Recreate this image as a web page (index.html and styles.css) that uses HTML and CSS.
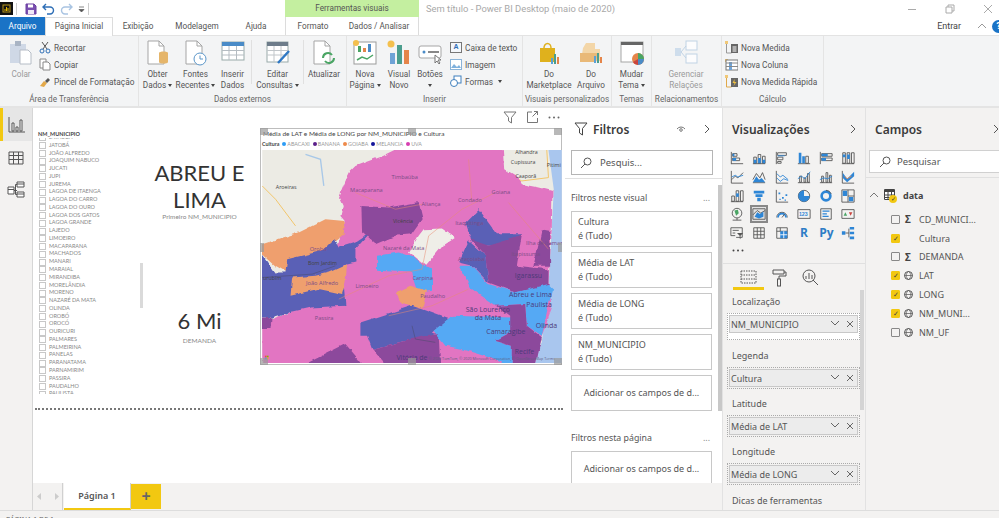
FILE: index.html
```html
<!DOCTYPE html>
<html lang="pt">
<head>
<meta charset="utf-8">
<title>Power BI Desktop</title>
<link rel="stylesheet" href="styles.css">
</head>
<body>
<div class="app">
  <header class="titlebar">
    <div class="qat">
      <svg class="ico-app" width="13" height="13" viewBox="0 0 13 13"><rect width="13" height="13" fill="#111"/><rect x="3" y="3" width="7" height="7" fill="none" stroke="#b8961c"/><path d="M5 9V7M6.500 9V5M8 9V6" stroke="#e6b800"/></svg>
      <span class="qsep"></span>
      <svg width="12" height="12" viewBox="0 0 12 12"><path d="M1 1h8l2 2v8H1z" fill="#7a4fb0" stroke="#6b3fa0"/><rect x="3" y="1.500" width="5" height="3" fill="#fff"/><rect x="3" y="7" width="6" height="4" fill="#efe8f6"/></svg>
      <svg width="13" height="12" viewBox="0 0 13 12"><path d="M4 1 1 4l3 3M1 4h7a3.500 3.500 0 0 1 0 7H5" fill="none" stroke="#2f6fb6" stroke-width="1.400"/></svg>
      <svg width="13" height="12" viewBox="0 0 13 12"><path d="M9 1l3 3-3 3M12 4H5a3.500 3.500 0 0 0 0 7h3" fill="none" stroke="#a9c4e2" stroke-width="1.400"/></svg>
      <svg width="7" height="12" viewBox="0 0 7 12"><path d="M1 4h5M1 6.500h5l-2.500 2.500z" fill="#555" stroke="#555" stroke-width=".7"/></svg>
      <span class="qsep"></span>
    </div>
    <div class="tools-title">Ferramentas visuais</div>
    <div class="doc-title">Sem título - Power BI Desktop (maio de 2020)</div>
    <div class="win">
      <svg width="10" height="10" viewBox="0 0 10 10"><path d="M1 5.500h8" stroke="#aaa"/></svg>
      <svg width="10" height="10" viewBox="0 0 10 10"><path d="M1 3h6v6H1zM3 3V1h6v6H7" fill="none" stroke="#aaa"/></svg>
      <svg width="10" height="10" viewBox="0 0 10 10"><path d="M1 1l8 8M9 1 1 9" stroke="#aaa"/></svg>
    </div>
  </header>

  <nav class="tabs">
    <span class="tab tab-file">Arquivo</span>
    <span class="tab tab-active">Página Inicial</span>
    <span class="tab tab-exib">Exibição</span>
    <span class="tab tab-model">Modelagem</span>
    <span class="tab tab-ajuda">Ajuda</span>
    <span class="tab tab-fmt">Formato</span>
    <span class="tab tab-dados">Dados / Analisar</span>
    <span class="tab-right">
      <span class="signin">Entrar</span>
      <svg width="10" height="6" viewBox="0 0 10 6"><path d="M1 5l4-4 4 4" fill="none" stroke="#999"/></svg>
      <span class="help">?</span>
    </span>
  </nav>

  <section class="ribbon">
    <div class="group g-clip">
      <div class="group-body">
        <div class="big w-colar muted">
          <svg class="big-ico" width="24" height="26" viewBox="0 0 24 26"><rect x="1" y="4" width="16" height="19" fill="#cfd8e6"/><rect x="6" y="1" width="6" height="5" fill="#a9b4c4"/><path d="M11 10h8l3 3v11H11z" fill="#fff" stroke="#b5bcc6"/></svg>
          <span class="lbl">Colar</span>
        </div>
        <div class="smalls s-clip">
          <div class="small"><svg width="12" height="13" viewBox="0 0 12 13"><path d="M3 1l5 7M9 1 4 8" stroke="#555" fill="none"/><circle cx="3" cy="10" r="2" fill="none" stroke="#2f6fb6"/><circle cx="9" cy="10" r="2" fill="none" stroke="#2f6fb6"/></svg>Recortar</div>
          <div class="small"><svg width="12" height="13" viewBox="0 0 12 13"><path d="M1 1h6v9H1z" fill="#fff" stroke="#888"/><path d="M4 4h5l2 2v6H4z" fill="#fff" stroke="#888"/></svg>Copiar</div>
          <div class="small"><svg width="12" height="13" viewBox="0 0 12 13"><path d="M1 11l4-5 3 2-3 4z" fill="#e3a94a"/><path d="M6 6l3-3 2 2-3 3z" fill="#555"/></svg>Pincel de Formatação</div>
        </div>
      </div>
      <div class="group-label">Área de Transferência</div>
    </div>

    <div class="group g-ext">
      <div class="group-body">
        <div class="big w-obter">
          <svg class="big-ico" width="24" height="26" viewBox="0 0 24 26"><path d="M2 1h11l5 5v18H2z" fill="#fff" stroke="#a5a5a5"/><path d="M13 1v5h5" fill="none" stroke="#a5a5a5"/><path d="M13 13c0-2 9-2 9 0v9c0 2-9 2-9 0z" fill="#e5b56a"/></svg>
          <span class="lbl">Obter<br>Dados <i class="caret"></i></span>
        </div>
        <div class="big w-fontes">
          <svg class="big-ico" width="24" height="26" viewBox="0 0 24 26"><path d="M2 1h11l5 5v18H2z" fill="#fff" stroke="#a5a5a5"/><path d="M13 1v5h5" fill="none" stroke="#a5a5a5"/><circle cx="16" cy="19" r="6" fill="#fff" stroke="#5b96c9"/><path d="M16 15.500V19h3" fill="none" stroke="#5b96c9"/></svg>
          <span class="lbl">Fontes<br>Recentes <i class="caret"></i></span>
        </div>
        <div class="big w-inserir">
          <svg class="big-ico" width="24" height="26" viewBox="0 0 24 26"><rect x="1" y="2" width="22" height="18" fill="#fff" stroke="#9aa"/><rect x="1" y="2" width="22" height="4" fill="#4a8bc7"/><path d="M1 10.500h22M1 15h22M8 6v14M15.500 6v14" stroke="#b5bcc2"/></svg>
          <span class="lbl">Inserir<br>Dados</span>
        </div>
        <span class="vsep"></span>
        <div class="big w-editar">
          <svg class="big-ico" width="24" height="26" viewBox="0 0 24 26"><rect x="1" y="2" width="21" height="20" fill="#fff" stroke="#9aa"/><rect x="1" y="2" width="21" height="4" fill="#6d7c8a"/><path d="M1 10.500h21M1 15h21M8 6v16M15 6v16" stroke="#c1c6ca"/><path d="M12 23l11-12" stroke="#2f78c4" stroke-width="2.400"/></svg>
          <span class="lbl">Editar<br>Consultas <i class="caret"></i></span>
        </div>
        <span class="vsep"></span>
        <div class="big w-atual">
          <svg class="big-ico" width="24" height="26" viewBox="0 0 24 26"><path d="M2 1h11l5 5v18H2z" fill="#fff" stroke="#a5a5a5"/><path d="M13 1v5h5" fill="none" stroke="#a5a5a5"/><path d="M11 18a5 5 0 0 1 9-3M22 18a5 5 0 0 1-9 3" fill="none" stroke="#4aa564" stroke-width="2"/></svg>
          <span class="lbl">Atualizar</span>
        </div>
      </div>
      <div class="group-label">Dados externos</div>
    </div>

    <div class="group g-ins">
      <div class="group-body">
        <div class="big w-nova">
          <svg class="big-ico" width="24" height="26" viewBox="0 0 24 26"><rect x="1" y="2" width="22" height="22" fill="#fff" stroke="#9b9b9b"/><rect x="5" y="6" width="3" height="6" fill="#4aa564"/><rect x="10" y="8" width="3" height="4" fill="#e5854a"/><rect x="15" y="4" width="3" height="8" fill="#4a8bc7"/><path d="M4 20l5-3 5 2 6-4" fill="none" stroke="#4aa564" stroke-width="1.500"/><circle cx="3" cy="3" r="3" fill="#f4c04e"/></svg>
          <span class="lbl">Nova<br>Página <i class="caret"></i></span>
        </div>
        <div class="big w-visual">
          <svg class="big-ico" width="24" height="26" viewBox="0 0 24 26"><circle cx="4" cy="4" r="3.500" fill="#f4c04e"/><rect x="3" y="13" width="5" height="11" fill="#6fa3d6"/><rect x="10" y="5" width="5" height="19" fill="#4b9e8e"/><rect x="17" y="10" width="5" height="14" fill="#e5854a"/></svg>
          <span class="lbl">Visual<br>Novo</span>
        </div>
        <div class="big w-botoes">
          <svg class="big-ico" width="24" height="26" viewBox="0 0 24 26"><rect x="1" y="6" width="22" height="12" rx="2" fill="#fff" stroke="#a5a5a5"/><circle cx="6" cy="12" r="1.500" fill="#4a8bc7"/><path d="M10 12h11" stroke="#555" stroke-width="1.400"/><path d="M17 15v8l2-2 2 3 1-1-2-3h3z" fill="#fff" stroke="#777"/></svg>
          <span class="lbl">Botões<br><i class="caret"></i></span>
        </div>
        <div class="smalls s-ins">
          <div class="small"><svg width="12" height="13" viewBox="0 0 12 13"><rect x=".500" y="1.500" width="11" height="10" fill="#f4f7fb" stroke="#777"/><text class="ico-a" x="3.500" y="8">A</text></svg>Caixa de texto</div>
          <div class="small"><svg width="12" height="13" viewBox="0 0 12 13"><rect x=".500" y="1.500" width="11" height="10" fill="#fff" stroke="#8ab3d8"/><path d="M1 10l3-4 3 3 2-2 2 3z" fill="#7fb1dd"/></svg>Imagem</div>
          <div class="small"><svg width="12" height="13" viewBox="0 0 12 13"><rect x="4" y="1" width="7" height="7" fill="#fff" stroke="#3f7fbd"/><circle cx="4" cy="8" r="3.500" fill="#fff" stroke="#3f7fbd"/></svg>Formas <i class="caret caret-s"></i></div>
        </div>
      </div>
      <div class="group-label">Inserir</div>
    </div>

    <div class="group g-vis">
      <div class="group-body">
        <div class="big w-market">
          <svg class="big-ico" width="24" height="26" viewBox="0 0 24 26"><path d="M3 8h15v14H3z" fill="#dfb11d"/><path d="M7 8a3.500 4.500 0 0 1 7 0" fill="none" stroke="#dfb11d" stroke-width="1.500"/><rect x="14" y="18" width="2" height="6" fill="#5aa0d6"/><rect x="17" y="14" width="2" height="10" fill="#4b9e8e"/><rect x="20" y="17" width="2" height="7" fill="#e5854a"/></svg>
          <span class="lbl">Do<br>Marketplace</span>
        </div>
        <div class="big w-arq">
          <svg class="big-ico" width="24" height="26" viewBox="0 0 24 26"><path d="M4 8l3-5h9v6h5v12H2z" fill="#f3d6a8"/><path d="M1 13h18l-2 9H1z" fill="#e9b978"/><rect x="15" y="16" width="2" height="7" fill="#5aa0d6"/><rect x="18" y="13" width="2" height="10" fill="#4b9e8e"/><rect x="21" y="17" width="2" height="6" fill="#e5854a"/></svg>
          <span class="lbl">Do<br>Arquivo</span>
        </div>
      </div>
      <div class="group-label">Visuais personalizados</div>
    </div>

    <div class="group g-tema">
      <div class="group-body">
        <div class="big w-tema">
          <svg class="big-ico" width="24" height="26" viewBox="0 0 24 26"><rect x="1" y="2" width="22" height="20" fill="#fff" stroke="#a5a5a5"/><rect x="1" y="2" width="22" height="3" fill="#666"/><circle cx="18" cy="19" r="6" fill="#e5854a"/><path d="M18 19V13a6 6 0 0 1 6 6z" fill="#4aa564"/><path d="M18 19h6a6 6 0 0 1-6 6z" fill="#4a8bc7"/><path d="M18 19v6a6 6 0 0 1-5-3z" fill="#c9453f"/></svg>
          <span class="lbl">Mudar<br>Tema <i class="caret"></i></span>
        </div>
      </div>
      <div class="group-label">Temas</div>
    </div>

    <div class="group g-rel">
      <div class="group-body">
        <div class="big w-ger faded">
          <svg class="big-ico" width="24" height="26" viewBox="0 0 24 26"><rect x="12" y="1" width="11" height="9" fill="#fff" stroke="#b4cbe2"/><rect x="12" y="14" width="11" height="9" fill="#fff" stroke="#b4cbe2"/><rect x="1" y="8" width="6" height="8" fill="#c5d8ea"/><path d="M7 12l5-6M7 12l5 6" stroke="#b4cbe2"/></svg>
          <span class="lbl">Gerenciar<br>Relações</span>
        </div>
      </div>
      <div class="group-label">Relacionamentos</div>
    </div>

    <div class="group g-calc">
      <div class="group-body">
        <div class="smalls s-calc">
          <div class="small"><svg width="13" height="13" viewBox="0 0 13 13"><rect width="3" height="3" fill="#f0c878"/><path d="M1.500 3v9h5" fill="none" stroke="#999"/><rect x="6" y="3" width="7" height="9" fill="#666"/><path d="M7.500 6h4M7.500 8h4M7.500 10h4" stroke="#fff"/></svg>Nova Medida</div>
          <div class="small"><svg width="13" height="13" viewBox="0 0 13 13"><rect x="0" y="1" width="3" height="3" fill="#f0c878"/><rect x="1" y="2" width="12" height="10" fill="#fff" stroke="#777"/><rect x="4" y="4" width="3" height="8" fill="#6fa3d6"/><path d="M1 5h12M1 8.500h12" stroke="#888"/></svg>Nova Coluna</div>
          <div class="small"><svg width="13" height="13" viewBox="0 0 13 13"><rect width="3" height="3" fill="#f0c878"/><path d="M1.500 3v9h5" fill="none" stroke="#e0a94a"/><rect x="6" y="3" width="7" height="9" fill="#666"/><path d="M9.500 4 7.500 8h2l-1 3 3-4h-2z" fill="#f0c040"/></svg>Nova Medida Rápida</div>
        </div>
      </div>
      <div class="group-label">Cálculo</div>
    </div>
  </section>

  <main class="workspace">
    <aside class="rail">
      <div class="rail-item rail-on"><svg width="18" height="18" viewBox="0 0 18 18"><path d="M1 1v15h16" fill="none" stroke="#555"/><path d="M4 7h2v8H4zM8 11h2v4H8zM12 4h2v11h-2z" fill="#fff" stroke="#555"/></svg></div>
      <div class="rail-item"><svg width="18" height="18" viewBox="0 0 18 18"><path d="M2 3h14v12H2zM2 6.500h14M2 10.500h14M6.500 3v12M11.500 3v12" fill="none" stroke="#555"/></svg></div>
      <div class="rail-item"><svg width="18" height="18" viewBox="0 0 18 18"><path d="M10 1h7v5h-7zM10 3h7M10 11h7v5h-7zM10 13h7M1 6h6v7H1zM1 8.500h6M7 9.500h3M10 3.500H8.500v10H10" fill="#fff" stroke="#555"/></svg></div>
    </aside>

    <div class="center">
      <div class="canvas">
        <div class="report">
          <div class="slicer">
            <div class="slicer-title">NM_MUNICIPIO</div>
            <ul class="slicer-list">
              <li>JATAÚBA</li><li>JATOBÁ</li><li>JOÃO ALFREDO</li><li>JOAQUIM NABUCO</li><li>JUCATI</li><li>JUPI</li><li>JUREMA</li><li>LAGOA DE ITAENGA</li><li>LAGOA DO CARRO</li><li>LAGOA DO OURO</li><li>LAGOA DOS GATOS</li><li>LAGOA GRANDE</li><li>LAJEDO</li><li>LIMOEIRO</li><li>MACAPARANA</li><li>MACHADOS</li><li>MANARI</li><li>MARAIAL</li><li>MIRANDIBA</li><li>MORELÂNDIA</li><li>MORENO</li><li>NAZARÉ DA MATA</li><li>OLINDA</li><li>OROBÓ</li><li>OROCÓ</li><li>OURICURI</li><li>PALMARES</li><li>PALMEIRINA</li><li>PANELAS</li><li>PARANATAMA</li><li>PARNAMIRIM</li><li>PASSIRA</li><li>PAUDALHO</li><li>PAULISTA</li>
            </ul>
          </div>
          <div class="scrollbar-col"><span class="slicer-thumb"></span></div>
          <div class="cards">
            <div class="card card-top">
              <div class="card-value">ABREU E LIMA</div>
              <div class="card-label">Primeiro NM_MUNICIPIO</div>
            </div>
            <div class="card card-bottom">
              <div class="card-value">6 Mi</div>
              <div class="card-label">DEMANDA</div>
            </div>
          </div>
          <div class="map-col">
            <div class="visual-head">
              <svg width="14" height="13" viewBox="0 0 14 13"><path d="M1 1h12L8.500 6.500V12l-3-2V6.500z" fill="none" stroke="#777"/></svg>
              <svg width="11" height="12" viewBox="0 0 11 12"><path d="M5 1H.5v10.500H10.500V7M7 .500h3.500V4M10.500 .500 5.500 5.500" fill="none" stroke="#777"/></svg>
              <svg width="12" height="3" viewBox="0 0 12 3"><circle cx="1.500" cy="1.500" r="1" fill="#666"/><circle cx="6" cy="1.500" r="1" fill="#666"/><circle cx="10.500" cy="1.500" r="1" fill="#666"/></svg>
            </div>
            <div class="map-frame">
              <div class="map-title">Média de LAT e Média de LONG por NM_MUNICIPIO e Cultura</div>
              <div class="legend">
                <b>Cultura</b>
                <span><i class="dot d-aba"></i>ABACAXI</span>
                <span><i class="dot d-ban"></i>BANANA</span>
                <span><i class="dot d-goi"></i>GOIABA</span>
                <span><i class="dot d-mel"></i>MELANCIA</span>
                <span><i class="dot d-uva"></i>UVA</span>
              </div>
              <svg class="map" width="300" height="213" viewBox="20 122 900 640">
                <defs>
                  <filter id="rough" x="-5%" y="-5%" width="110%" height="110%">
                    <feTurbulence type="fractalNoise" baseFrequency="0.03" numOctaves="3" seed="4"/>
                    <feDisplacementMap in="SourceGraphic" scale="14" xChannelSelector="R" yChannelSelector="G"/>
                    <feGaussianBlur stdDeviation="1"/>
                  </filter>
                </defs>
                <rect x="20" y="122" width="900" height="640" fill="#ecebe4"/>
                <path d="M880 122H920V762H830L860 700 882 500 896 240z" fill="#a9c6ee"/>
                <path d="M150 135 195 150 205 230" fill="none" stroke="#a8c8e8" stroke-width="4"/>
                <path d="M20 230 60 270 120 350M750 190 800 215 880 205M875 122 880 205" fill="none" stroke="#f2c66b" stroke-width="3"/>
                <g filter="url(#rough)">
                  <path d="M417 122 380 140 340 155 300 170 285 185 270 215 250 265 262 290 255 320 268 335 240 420 130 600 20 640V775H840L860 680 890 600 880 520 890 360 892 245 850 235 800 225 790 205 750 180 745 110H417z" fill="#e274c2"/>
                  <path d="M10 408 130 370 210 330 268 335 265 375 240 395 215 425 130 450 95 490 60 470 10 425z" fill="#ef9f6e"/>
                  <path d="M10 420 60 490 90 490 95 450 200 425 235 390 250 415 300 400 345 370 300 420 300 460 260 470 270 590 165 595 100 610 48 625 10 620z" fill="#5a60b6"/>
                  <path d="M110 505 180 500 220 490 275 465 270 520 260 555 190 540 105 560z" fill="#ef9f6e"/>
                  <path d="M318 290 400 295 490 278 502 330 470 375 420 380 360 405 320 370z" fill="#8c4a9c"/>
                  <path d="M460 430 490 380 505 360 560 358 598 385 560 410 510 470z" fill="#efeee8"/>
                  <path d="M365 440 430 430 475 445 510 475 530 480 530 545 490 550 470 490 365 485z" fill="#55a9f4"/>
                  <path d="M420 550 465 530 515 545 500 598 440 585z" fill="#ef9f6e"/>
                  <path d="M315 640 470 590 580 630 530 670 550 680 450 695 350 720 335 680 315 680z" fill="#5a60b6"/>
                  <path d="M350 720 450 695 550 670 555 775H400z" fill="#8c4a9c"/>
                  <path d="M130 775 270 705 330 775zM10 620 48 625 45 660 10 660z" fill="#8c4a9c"/>
                  <path d="M630 340 670 300 725 375 800 375 790 400 700 410 650 400z" fill="#5a60b6"/>
                  <path d="M645 390 700 410 780 385 800 375 785 470 880 480 880 530 780 550 700 520 690 440zM835 470 860 360 885 365 885 470z" fill="#8c4a9c"/>
                  <path d="M610 460 640 395 690 440 700 520 650 470z" fill="#5a60b6"/>
                  <path d="M610 470 650 470 700 525 780 550 880 525 895 540 880 590 860 680 815 650 810 585 725 590 700 575 650 540z" fill="#55a9f4"/>
                  <path d="M535 665 590 620 770 625 765 670 720 695 770 710 770 775 700 745 620 720 570 710z" fill="#55a9f4"/>
                  <path d="M725 590 810 585 815 650 860 685 840 775H770L770 710 720 695 765 670 765 620z" fill="#8c4a9c"/>
                </g>
                <path d="M250 570 400 500 500 480 520 380 620 300 720 250M400 620 530 590 640 540M640 150 650 280M300 250 420 300 500 285M760 280 880 420" fill="none" stroke="#e98a70" stroke-width="3" opacity=".5"/>
                <path d="M20 505 170 495 240 470M470 650 480 690 540 700" fill="none" stroke="#4a4a6a" stroke-width="3" opacity=".5"/>
                <g class="places">
                  <text x="448" y="208">Timbaúba</text><text x="333" y="248">Macaparana</text><text x="527" y="291">Aliança</text><text x="644" y="278">Condado</text><text x="737" y="253">Goiana</text>
                  <text x="188" y="424">Orobó</text><text x="200" y="527">João Alfredo</text><text x="335" y="538">Limoeiro</text><text x="206" y="634">Passira</text><text x="502" y="514">Carpina</text><text x="532" y="568">Paudalho</text>
                  <text x="642" y="348">Itaquitinga</text><text x="812" y="442">Itapissuma</text><text x="445" y="423">Nazaré da Mata</text><text x="648" y="457">Araçoiaba</text><text x="872" y="407">Ilha de Itamará</text>
                </g>
                <g class="places-dark">
                  <text x="443" y="340">Vicência</text><text x="201" y="467">Bom Jardim</text><text x="50" y="512">urubim</text><text x="92" y="238">Aroeiras</text><text x="814" y="133">Alhandra</text><text x="804" y="164">Cupissura</text><text x="812" y="205">Caaporã</text><text x="896" y="172">Pitimi</text>
                </g>
                <g class="places-big">
                  <text x="698" y="610">São Lourenço</text><text x="698" y="634">da Mata</text><text x="752" y="674">Camaragibe</text><text x="470" y="752">Vitória de</text><text x="820" y="506">Igarassu</text><text x="826" y="565">Abreu e Lima</text><text x="852" y="594">Paulista</text><text x="874" y="656">Olinda</text><text x="808" y="735">Recife</text>
                </g>
                <text class="attrib" x="710" y="752">© 2020 TomTom, © 2020 Microsoft Corporation, © OpenStreetMap  Terms</text>
                <g><rect x="28" y="740" width="5" height="5" fill="#e8553a"/><rect x="34" y="740" width="5" height="5" fill="#7fba00"/><rect x="28" y="746" width="5" height="5" fill="#00a4ef"/><rect x="34" y="746" width="5" height="5" fill="#ffb900"/></g>
              </svg>
              <i class="handle h-tl"></i><i class="handle h-tc"></i><i class="handle h-tr"></i>
              <i class="handle h-ml"></i><i class="handle h-mr"></i>
              <i class="handle h-bl"></i><i class="handle h-bc"></i><i class="handle h-br"></i>
            </div>
          </div>
        </div>
        <div class="dotline"></div>
      </div>
      <div class="pagebar">
        <span class="arrows">
          <svg width="5" height="7" viewBox="0 0 5 7"><path d="M4 0v7L0 3.500z" fill="#ccc"/></svg>
          <svg width="5" height="7" viewBox="0 0 5 7"><path d="M1 0v7l4-3.500z" fill="#ccc"/></svg>
        </span>
        <span class="page-tab">Página 1</span>
        <span class="page-add">+</span>
      </div>
    </div>

    <aside class="filters">
      <div class="filters-scroll">
        <div class="pane-head f-head">
          <svg width="14" height="14" viewBox="0 0 14 14"><path d="M1 1h12L8.500 6.500V13l-3-2V6.500z" fill="none" stroke="#444"/></svg>
          <span class="pane-title f-title">Filtros</span>
          <svg class="eye" width="10" height="8" viewBox="0 0 10 8"><path d="M1 4a5 5 0 0 1 8 0" fill="none" stroke="#777"/><circle cx="5" cy="5" r="1.300" fill="none" stroke="#777"/></svg>
          <svg width="6" height="10" viewBox="0 0 6 10"><path d="M1 1l4 4-4 4" fill="none" stroke="#555"/></svg>
        </div>
        <div class="search f-search">
          <svg width="12" height="12" viewBox="0 0 12 12"><circle cx="7.500" cy="4.500" r="3.500" fill="none" stroke="#555"/><path d="M5 7 1 11" stroke="#555"/></svg>
          <span>Pesquis...</span>
        </div>
        <div class="f-rule"></div>
        <div class="f-sec"><span>Filtros neste visual</span><span class="dots">...</span></div>
        <div class="f-card">Cultura<br>é (Tudo)</div>
        <div class="f-card">Média de LAT<br>é (Tudo)</div>
        <div class="f-card">Média de LONG<br>é (Tudo)</div>
        <div class="f-card">NM_MUNICIPIO<br>é (Tudo)</div>
        <div class="f-card f-add">Adicionar os campos de d...</div>
        <div class="f-sec f-sec2"><span>Filtros nesta página</span><span class="dots">...</span></div>
        <div class="f-card f-add">Adicionar os campos de d...</div>
        <span class="f-thumb"></span>
      </div>
      <div class="f-foot"></div>
    </aside>

    <aside class="viz">
      <div class="pane-head v-head">
        <span class="pane-title">Visualizações</span>
        <svg width="6" height="10" viewBox="0 0 6 10"><path d="M1 1l4 4-4 4" fill="none" stroke="#555"/></svg>
      </div>
      <div class="viz-grid">
        <svg viewBox="0 0 16 16"><path class="g" d="M1.500 1v14M1.500 14.500H15M3 3h5v3H3zM3 8h8v3H3z"/><path class="b" d="M3 3h2v3H3zM3 8h4v3H3z"/></svg>
        <svg viewBox="0 0 16 16"><path class="g" d="M1 14.500h14M2 7h3v7H2zM7 4h3v10H7zM12 6h3v8h-3z"/><path class="b" d="M2 10h3v4H2zM7 8h3v6H7zM12 10h3v4h-3z"/></svg>
        <svg viewBox="0 0 16 16"><path class="g" d="M1.500 1v14M3 2h10v3H3zM3 7h6v3H3zM3 12h4v2H3z"/><path class="b" d="M3 5h8v1H3z"/></svg>
        <svg viewBox="0 0 16 16"><path class="g" d="M1 14.500h14M10 6h3v8h-3z"/><path class="b" d="M2 2h3v12H2zM6 6h3v8H6z"/></svg>
        <svg viewBox="0 0 16 16"><path class="g" d="M1.500 1v14M3 3h12v3H3zM3 8h12v3H3z"/><path class="b" d="M3 3h7v3H3zM3 8h5v3H3z"/></svg>
        <svg viewBox="0 0 16 16"><path class="g" d="M1 14.500h14M2 2h3v12H2zM7 2h3v12H7zM12 2h3v12h-3z"/><path class="b" d="M7 4h3v5H7zM2 4h3v3H2z"/></svg>

        <svg viewBox="0 0 16 16"><path class="g" d="M1.500 1v14H15M2 11l4-4 3 2 6-6"/><path class="l" d="M2 8l4-2 3 2 6-2"/></svg>
        <svg viewBox="0 0 16 16"><path class="g" d="M1 14.500h14M1 11l4-7 4 5 3-6 3 8"/><path class="b" d="M1 14l4-7 3 4 3-2 4 5z"/></svg>
        <svg viewBox="0 0 16 16"><path class="g" d="M1.500 1v14H15"/><path class="l" d="M2 4l4 4 3-2 6 5M2 9l4 4 4-3 5 2"/></svg>
        <svg viewBox="0 0 16 16"><path class="g" d="M1 14.500h14M3 7h2v7H3zM8 9h2v5H8zM12 4h2v10h-2z"/><path class="l" d="M1 10l4-3 4 3 6-8"/></svg>
        <svg viewBox="0 0 16 16"><path class="g" d="M1 14.500h14M3 7h2v7H3zM8 3h2v11H8zM12 6h2v8h-2z"/><path class="l" d="M1 11l4-2 5 1 5-3"/></svg>
        <svg viewBox="0 0 16 16"><path class="g" d="M1.500 1v14H15"/><path class="b" d="M2 3l5 7 8-8v5l-8 7-5-5z"/><path class="o" d="M4 7l3 3 5-3"/></svg>

        <svg viewBox="0 0 16 16"><path class="g" d="M1 14.500h14M2 8h3v6H2zM7 2h3v12H7zM12 2h3v12h-3z"/><path class="b" d="M7 5h3v4H7z"/></svg>
        <svg viewBox="0 0 16 16"><path class="b" d="M2 2h12v3H2zM4 6h8v3H4zM6 10h4v4H6z"/></svg>
        <svg viewBox="0 0 16 16"><path class="g" d="M1.500 1v14H15"/><path class="b" d="M4 4h2v2H4zM8 9h2v2H8zM12 6h2v2h-2zM5 11h1.500v1.500H5zM11 12h1.500v1.500H11z"/></svg>
        <svg viewBox="0 0 16 16"><circle class="g" cx="8" cy="8" r="6.500"/><path class="b" d="M8 8V1.500A6.500 6.500 0 1 1 1.500 8z" transform="rotate(90 8 8)"/></svg>
        <svg viewBox="0 0 16 16"><circle cx="8" cy="8" r="5" fill="none" stroke="#2e86d6" stroke-width="3"/><path class="g" d="M8 1.500a6.500 6.500 0 0 1 6 4"/></svg>
        <svg viewBox="0 0 16 16"><path class="g" d="M1 1h14v14H1zM8 1v14M8 8h7"/><path class="b" d="M2 2h5v6H2zM9 9h5v5H9z"/></svg>

        <svg viewBox="0 0 16 16"><circle class="g" cx="8" cy="7" r="5.500"/><path d="M5 4l4-1 1 4-3 3z" fill="#4aa564"/><path class="g" d="M3 15h10M8 12.500V15"/></svg>
        <svg class="viz-sel" viewBox="0 0 16 16"><path class="g" d="M1 2h14v12H1zM1 9l5-5 4 3 5-3"/><path class="b" d="M3 11l3-5 3 2 4-3v6l-5 2z"/></svg>
        <svg viewBox="0 0 16 16"><path class="g" d="M2 12a6 6 0 0 1 12 0"/><path class="st" d="M3.500 12a4.500 4.500 0 0 1 9 0"/><path class="g" d="M8 12l3-4"/></svg>
        <svg viewBox="0 0 16 16"><path class="g" d="M1 3h14v10H1z"/><text class="nums" x="2.200" y="10.500">123</text></svg>
        <svg viewBox="0 0 16 16"><path class="g" d="M2 2h12v12H2z"/><path class="b" d="M4 4h8v1.500H4zM4 7h5v1.500H4zM4 10h7v1.500H4z"/></svg>
        <svg viewBox="0 0 16 16"><path class="g" d="M1 3h14v10H1z"/><path d="M3 10l2-4 2 4z" fill="#4aa564"/><path d="M9 6h4l-2 4z" fill="#c9453f"/></svg>

        <svg viewBox="0 0 16 16"><path class="g" d="M1 2h13v11H7M1 2v9h5M3 5h7M3 8h3"/><path d="M8 8h7l-3 3v4l-1-1v-3z" fill="#555"/></svg>
        <svg viewBox="0 0 16 16"><path class="g" d="M2 2h12v12H2zM2 6h12M2 10h12M6 2v12M10 2v12"/></svg>
        <svg viewBox="0 0 16 16"><path class="g" d="M2 2h12v12H2zM2 6h12M6 2v4"/><path class="b" d="M6 6h8v8H6z"/><path class="wl" d="M6 10h8M10 6v8"/></svg>
        <span class="viz-r">R</span>
        <span class="viz-py">Py</span>
        <svg viewBox="0 0 16 16"><path class="g" d="M5 8h4M9 3v10"/><path class="b" d="M1 6h4v4H1zM10 1h5v3h-5zM10 6.500h5v3h-5zM10 12h5v3h-5z"/></svg>
      </div>
      <div class="viz-more">
        <svg width="12" height="3" viewBox="0 0 12 3"><circle cx="1.500" cy="1.500" r="1" fill="#444"/><circle cx="6" cy="1.500" r="1" fill="#444"/><circle cx="10.500" cy="1.500" r="1" fill="#444"/></svg>
      </div>
      <div class="viz-tabs">
        <span class="vt vt-on"><svg width="17" height="16" viewBox="0 0 17 16"><path d="M1 2h15v12H1z" fill="none" stroke="#555" stroke-dasharray="1.500 1"/><path d="M1 6h15M1 10h15" stroke="#555" stroke-dasharray="1.500 1"/></svg></span>
        <span class="vt"><svg width="15" height="18" viewBox="0 0 15 18"><path d="M1 1h11v4H1zM12 3h2v4H7v3" fill="none" stroke="#555"/><rect x="5.500" y="10" width="3" height="7" fill="none" stroke="#555"/></svg></span>
        <span class="vt"><svg width="17" height="17" viewBox="0 0 17 17"><circle cx="7" cy="7" r="6" fill="none" stroke="#555"/><path d="M4 10V7M7 10V4M10 10V6M11 11l5 5" stroke="#555"/></svg></span>
      </div>
      <div class="wells">
        <div class="well-label l-first">Localização</div>
        <div class="well well-tall"><div class="pill"><span>NM_MUNICIPIO</span><svg width="24" height="8" viewBox="0 0 24 8"><path d="M1 1l4 4 4-4M17 1l6 6M23 1l-6 6" fill="none" stroke="#666"/></svg></div></div>
        <div class="well-label l-leg">Legenda</div>
        <div class="well"><div class="pill"><span>Cultura</span><svg width="24" height="8" viewBox="0 0 24 8"><path d="M1 1l4 4 4-4M17 1l6 6M23 1l-6 6" fill="none" stroke="#666"/></svg></div></div>
        <div class="well-label">Latitude</div>
        <div class="well"><div class="pill"><span>Média de LAT</span><svg width="24" height="8" viewBox="0 0 24 8"><path d="M1 1l4 4 4-4M17 1l6 6M23 1l-6 6" fill="none" stroke="#666"/></svg></div></div>
        <div class="well-label">Longitude</div>
        <div class="well"><div class="pill"><span>Média de LONG</span><svg width="24" height="8" viewBox="0 0 24 8"><path d="M1 1l4 4 4-4M17 1l6 6M23 1l-6 6" fill="none" stroke="#666"/></svg></div></div>
        <div class="well-label l-leg">Dicas de ferramentas</div>
        <span class="w-thumb"></span>
      </div>
    </aside>

    <aside class="fields">
      <div class="pane-head c-head">
        <span class="pane-title">Campos</span>
        <svg width="6" height="10" viewBox="0 0 6 10"><path d="M1 1l4 4-4 4" fill="none" stroke="#555"/></svg>
      </div>
      <div class="search c-search">
        <svg width="12" height="12" viewBox="0 0 12 12"><circle cx="7.500" cy="4.500" r="3.500" fill="none" stroke="#555"/><path d="M5 7 1 11" stroke="#555"/></svg>
        <span>Pesquisar</span>
      </div>
      <div class="c-rule"></div>
      <div class="tree-root">
        <svg width="10" height="6" viewBox="0 0 10 6"><path d="M1 5l4-4 4 4" fill="none" stroke="#777"/></svg>
        <span class="tbl-ico">
          <svg width="11" height="11" viewBox="0 0 11 11"><path d="M.500 .500h10v10H.500z" fill="#fff" stroke="#444"/><path d="M.500 2h10" stroke="#444" stroke-width="2"/><path d="M.500 6h10M.500 8.500h10M4 3v8M7.500 3v8" stroke="#444"/></svg>
          <i class="tbl-badge">✓</i>
        </span>
        <b>data</b>
      </div>
      <div class="field"><i class="cb"></i><span class="ft">Σ</span><span>CD_MUNICI...</span></div>
      <div class="field"><i class="cb cb-on">✓</i><span class="ft"></span><span>Cultura</span></div>
      <div class="field"><i class="cb"></i><span class="ft">Σ</span><span>DEMANDA</span></div>
      <div class="field"><i class="cb cb-on">✓</i><span class="ft"><svg width="9" height="9" viewBox="0 0 9 9"><circle cx="4.500" cy="4.500" r="4" fill="none" stroke="#555"/><path d="M.500 4.500h8M4.500 .500c-3 2-3 6 0 8M4.500 .500c3 2 3 6 0 8" fill="none" stroke="#555" stroke-width=".7"/></svg></span><span>LAT</span></div>
      <div class="field"><i class="cb cb-on">✓</i><span class="ft"><svg width="9" height="9" viewBox="0 0 9 9"><circle cx="4.500" cy="4.500" r="4" fill="none" stroke="#555"/><path d="M.500 4.500h8M4.500 .500c-3 2-3 6 0 8M4.500 .500c3 2 3 6 0 8" fill="none" stroke="#555" stroke-width=".7"/></svg></span><span>LONG</span></div>
      <div class="field"><i class="cb cb-on">✓</i><span class="ft"><svg width="9" height="9" viewBox="0 0 9 9"><circle cx="4.500" cy="4.500" r="4" fill="none" stroke="#555"/><path d="M.500 4.500h8M4.500 .500c-3 2-3 6 0 8M4.500 .500c3 2 3 6 0 8" fill="none" stroke="#555" stroke-width=".7"/></svg></span><span>NM_MUNI...</span></div>
      <div class="field"><i class="cb"></i><span class="ft"><svg width="9" height="9" viewBox="0 0 9 9"><circle cx="4.500" cy="4.500" r="4" fill="none" stroke="#555"/><path d="M.500 4.500h8M4.500 .500c-3 2-3 6 0 8M4.500 .500c3 2 3 6 0 8" fill="none" stroke="#555" stroke-width=".7"/></svg></span><span>NM_UF</span></div>
    </aside>
  </main>

  <footer class="status">PÁGINA 1 DE 1</footer>
</div>
</body>
</html>
```

FILE: styles.css
```css
* { box-sizing: border-box; }
html, body { margin: 0; padding: 0; }
body { width: 999px; height: 518px; overflow: hidden; background: #fff; font-family: "Noto Sans", "Open Sans", sans-serif; color: #444; }
i { font-style: normal; }
svg { display: block; flex: none; }

.app { width: 999px; height: 518px; display: flex; flex-direction: column; overflow: hidden; }

/* title bar */
.titlebar { height: 17px; display: flex; align-items: center; background: #fff; flex: none; font-family: Roboto, sans-serif; }
.qat { width: 285px; height: 17px; display: flex; align-items: center; gap: 5px; }
.qsep { width: 1px; height: 12px; background: #ccc; margin: 0 3px 0 -2px; }
.tools-title { width: 134px; height: 17px; background: #c4efa0; font-size: 8.200px; line-height: 17px; text-align: center; color: #555; }
.doc-title { margin-left: 7px; font-size: 9.400px; color: #a8a8a8; width: 400px; white-space: nowrap; }
.win { margin-left: auto; display: flex; gap: 28px; padding-right: 6px; }

/* tabs */
.tabs { height: 18px; display: flex; align-items: stretch; flex: none; font-family: Roboto, sans-serif; font-size: 8.200px; line-height: 18px; color: #555; background: #fff; }
.tab { text-align: center; white-space: nowrap; }
.tab-file { width: 45px; background: #1a73c6; color: #fff; }
.tab-active { width: 68px; background: #fff; border: 1px solid #dcdcdc; border-bottom: 0; line-height: 16px; margin-bottom: -1px; position: relative; }
.tab-exib { width: 50px; }
.tab-model { width: 68px; }
.tab-ajuda { width: 36px; margin: 0 11px 0 7px; }
.tab-fmt { width: 55px; border-left: 1px solid #dcdcdc; }
.tab-dados { width: 79px; border-right: 1px solid #dcdcdc; }
.tab-right { margin-left: auto; display: flex; align-items: center; gap: 5px; color: #444; margin-right: -6px; }
.signin { margin-right: 11px; font-size: 9px; }
.help { width: 13px; height: 13px; border-radius: 50%; background: #1a73c6; color: #fff; text-align: center; line-height: 13px; font-weight: 700; }

/* ribbon */
.ribbon { height: 73px; display: flex; background: #f3f4f5; border-top: 1px solid #e3e3e3; border-bottom: 2px solid #e4e4e4; flex: none; font-family: Roboto, sans-serif; }
.group { display: flex; flex-direction: column; border-right: 1px solid #e4e4e4; height: 70px; }
.group-body { height: 58px; display: flex; padding-top: 4px; }
.group-label { text-align: center; font-size: 8.200px; line-height: 11px; color: #666; white-space: nowrap; }
.g-clip { width: 139px; }
.g-ext { width: 208px; }
.g-ins { width: 176px; }
.g-vis { width: 89px; }
.g-tema { width: 40px; }
.g-rel { width: 70px; }
.g-calc { width: 102px; }
.big { display: flex; flex-direction: column; align-items: center; font-size: 8.200px; line-height: 11px; color: #555; text-align: center; white-space: nowrap; }
.big-ico { height: 26px; margin-bottom: 3px; }
.muted .lbl, .faded .lbl { color: #9a9a9a; }
.faded svg { opacity: .8; }
.w-colar { width: 36px; margin-left: 3px; }
.w-obter { width: 39px; margin-left: -1px; }
.w-fontes { width: 37px; }
.w-inserir { width: 37px; }
.w-editar { width: 51px; }
.w-atual { width: 36px; margin-left: 2px; }
.w-nova { width: 40px; margin-left: -2px; }
.w-visual { width: 28px; }
.w-botoes { width: 34px; }
.w-market { width: 46px; margin-left: 3px; }
.w-arq { width: 38px; }
.w-tema { width: 40px; }
.w-ger { width: 68px; }
.vsep { width: 1px; height: 44px; background: #e0e0e0; }
.caret { display: inline-block; width: 0; height: 0; border: 2px solid transparent; border-top: 3px solid #444; border-bottom: 0; vertical-align: 1px; }
.smalls { display: flex; flex-direction: column; margin-top: -1px; }
.small { height: 17px; display: flex; align-items: center; gap: 3px; font-size: 8.300px; color: #555; white-space: nowrap; }
.s-clip { margin-left: 0; }
.s-clip .small { gap: 3px; }
.s-ins { margin-left: 3px; }
.s-calc { margin-left: 3px; }
.caret-s { margin-left: 2px; }
.ico-a { font-size: 7px; fill: #2f6fb6; font-weight: 700; font-family: "Liberation Sans", sans-serif; }

/* workspace */
.workspace { height: 402px; display: flex; flex: none; }
.rail { width: 33px; background: #f3f2f1; border-right: 1px solid #d6d6d6; flex: none; display: flex; flex-direction: column; }
.rail-item { height: 32px; display: flex; align-items: center; justify-content: center; }
.rail-on { height: 33px; margin-bottom: 1px; background: #e6e6e6; border-left: 3px solid #f2c811; padding-right: 2px; }
.center { width: 532px; display: flex; flex-direction: column; flex: none; }
.canvas { height: 375px; background: #fff; flex: none; }
.report { height: 300px; display: flex; }
.dotline { margin-left: 2px; width: 528px; border-top: 2px dotted #777; }

.slicer { width: 107px; padding: 22px 0 0 5px; flex: none; }
.slicer-title { font-size: 5.500px; line-height: 8px; color: #444; font-family: "Lato", sans-serif; font-weight: 700; }
.slicer-list { list-style: none; margin: 0; padding: 0; height: 256px; overflow: hidden; }
.slicer-list li { height: 7.770px; line-height: 7.770px; font-size: 5.500px; color: #888; font-family: "Lato", sans-serif; white-space: nowrap; display: flex; align-items: center; gap: 3px; margin-left: 1px; }
.slicer-list li:first-child { margin-top: -4px; }
.slicer-list li::before { content: ""; width: 5px; height: 5px; border: 1px solid #c8c8c8; flex: none; }
.scrollbar-col { width: 3px; padding-top: 155px; flex: none; }
.slicer-thumb { display: block; width: 3px; height: 45px; background: #dadada; }
.cards { width: 113px; flex: none; display: flex; flex-direction: column; text-align: center; }
.card-top { padding-top: 51px; height: 198px; }
.card-value { font-family: "Lato", sans-serif; font-size: 22px; line-height: 27px; color: #333; }
.card-label { font-size: 6.500px; line-height: 9px; color: #888; font-family: "Lato", sans-serif; margin-top: -1px; }
.card-bottom .card-value { line-height: 30px; }
.card-bottom .card-label { margin-top: 0; }
.map-col { width: 302px; margin-left: 4px; flex: none; display: flex; flex-direction: column; }
.visual-head { height: 20px; display: flex; align-items: center; justify-content: flex-end; gap: 10px; padding: 0 2px 2px 0; }
.map-frame { position: relative; height: 237px; border: 1px solid #bdbdbd; padding: 0 0 0 1px; background: #fff; }
.map-title { font-size: 6.500px; line-height: 9px; height: 9px; color: #444; font-family: "Lato", sans-serif; white-space: nowrap; padding-left: 1px; }
.legend { display: flex; gap: 3px; height: 12px; align-items: center; font-size: 5.300px; color: #999; font-family: "Lato", sans-serif; }
.legend b { color: #444; }
.legend span { display: flex; align-items: center; gap: 1px; }
.dot { width: 4px; height: 4px; border-radius: 50%; display: block; }
.d-aba { background: #2e9cf5; }
.d-ban { background: #5b1f8a; }
.d-goi { background: #ee8a4a; }
.d-mel { background: #14149a; }
.d-uva { background: #d63fb0; }
.places text, .places-dark text, .places-big text { text-anchor: middle; font-family: "Open Sans", sans-serif; }
.places text { font-size: 17px; fill: #7b4c86; }
.places-dark text { font-size: 16px; fill: #444; }
.places-big text { font-size: 21px; fill: #4d3a78; }
.attrib { font-size: 11px; fill: #5d5d80; text-anchor: middle; font-family: "Open Sans", sans-serif; }
.handle { position: absolute; width: 8px; height: 7px; background: #9a9a9a; opacity: .7; }
.h-tl { left: -1px; top: -1px; }
.h-tc { left: 147px; top: -1px; }
.h-tr { right: -1px; top: -1px; }
.h-ml { left: -1px; top: 114px; width: 4px; height: 9px; }
.h-mr { right: -1px; top: 114px; width: 4px; height: 9px; }
.h-bl { left: -1px; bottom: -1px; }
.h-bc { left: 147px; bottom: -1px; }
.h-br { right: -1px; bottom: -1px; }

.pagebar { height: 27px; background: #f3f2f1; display: flex; align-items: stretch; flex: none; }
.arrows { width: 30px; display: flex; gap: 12px; align-items: center; justify-content: center; border-right: 1px solid #d0d0d0; margin-right: 1px; }
.page-tab { width: 67px; background: #fff; border-bottom: 2px solid #f2c811; border-right: 1px solid #d0d0d0; text-align: center; font-size: 9px; line-height: 26px; color: #555; font-weight: 600; }
.page-add { width: 30px; background: #f2c811; text-align: center; font-size: 16px; font-weight: 700; line-height: 25px; color: #666; margin: 1px 0; }

/* filters */
.filters { width: 157px; flex: none; background: #fff; display: flex; flex-direction: column; }
.filters-scroll { height: 375px; overflow: hidden; position: relative; flex: none; padding: 0 10px 0 6px; }
.f-foot { flex: 1; background: #f3f2f1; }
.pane-head { height: 42px; display: flex; align-items: center; }
.pane-title { font-size: 12px; font-weight: 600; color: #3a3a3a; }
.f-head { gap: 5px; padding-left: 3px; }
.f-title { flex: 1; }
.eye { margin-right: 13px; }
.f-head svg:last-child { margin-right: 2px; }
.search { display: flex; align-items: center; gap: 8px; background: #fff; border: 1px solid #b5b5b5; font-size: 9.500px; color: #555; }
.f-search { height: 25px; padding-left: 8px; margin-right: -1px; }
.f-rule { height: 1px; background: #e0e0e0; margin: 3px -10px 0 -6px; }
.f-sec { display: flex; justify-content: space-between; font-size: 8.800px; color: #555; height: 32px; padding-top: 13px; line-height: 12px; padding-right: 2px; }
.dots { color: #888; }
.f-sec2 { height: 35px; padding-top: 16px; }
.f-card { height: 36px; border: 1px solid #c8c8c8; font-size: 9px; line-height: 14px; color: #555; padding: 3px 0 0 6px; margin-bottom: 5px; width: 141px; }
.f-add { text-align: center; padding: 10px 0 0; white-space: nowrap; }
.f-thumb { position: absolute; left: 153px; top: 77px; width: 4px; height: 226px; background: #c8c8c8; }

/* visualizations */
.viz { width: 143px; flex: none; background: #f3f2f1; border-left: 1px solid #e2e2e2; display: flex; flex-direction: column; }
.v-head { padding: 0 9px; justify-content: space-between; flex: none; }
.viz-grid { display: grid; grid-template-columns: repeat(6, 14px); grid-auto-rows: 14px; column-gap: 8.300px; row-gap: 4.800px; padding: 1px 0 0 7px; height: 95px; flex: none; }
.viz-grid svg { width: 14px; height: 14px; }
.viz-grid .viz-sel { outline: 2px solid #888; background: #e3e3e3; }
.g { fill: none; stroke: #555; }
.b { fill: #2e86d6; }
.l { fill: none; stroke: #2e86d6; }
.o { fill: none; stroke: #e5854a; }
.st { fill: none; stroke: #2e86d6; stroke-width: 2; }
.wl { stroke: #fff; fill: none; }
.nums { font-size: 6px; fill: #2e86d6; font-weight: 700; font-family: "Liberation Sans", sans-serif; }
.viz-r, .viz-py { font-weight: 700; font-size: 12px; line-height: 14px; color: #2e7dc6; text-align: center; font-family: "Open Sans", sans-serif; }
.viz-more { height: 18px; padding: 4px 0 0 9px; flex: none; }
.viz-tabs { border-top: 1px solid #e0e0e0; height: 27px; display: flex; padding: 5px 0 0 10px; flex: none; }
.vt { width: 31px; height: 21px; display: flex; justify-content: center; }
.vt-on { border-bottom: 3px solid #f2c811; }
.wells { position: relative; flex: 1; overflow: hidden; padding-top: 6px; }
.well-label { font-size: 9px; line-height: 12px; color: #555; padding-left: 9px; margin-top: 9px; white-space: nowrap; }
.l-first { margin-top: 0; }
.l-leg { margin-top: 10px; }
.well { margin: 5px 0 0 4px; width: 133px; height: 22px; border: 1px dotted #aaa; padding: 1px; }
.well-tall { height: 27px; background: #fff; }
.pill { height: 18px; background: #ececec; border: 1px solid #c8c8c8; display: flex; align-items: center; justify-content: space-between; font-size: 9px; padding: 0 3px 0 1px; color: #555; }
.w-thumb { position: absolute; left: 137px; top: 0; width: 4px; height: 120px; background: #d4d4d4; }

/* fields */
.fields { width: 134px; flex: none; background: #f3f2f1; border-left: 1px solid #e2e2e2; }
.c-head { padding: 0 0 0 9px; justify-content: space-between; }
.c-search { height: 23px; margin-left: 3px; padding-left: 9px; border-right: 0; border-color: #d0d0d0; gap: 6px; }
.c-rule { height: 1px; background: #e0e0e0; margin-top: 4px; }
.tree-root { display: flex; align-items: center; gap: 5px; height: 18px; margin: 8px 0 6px; padding-left: 3px; font-size: 9px; color: #444; }
.tbl-ico { position: relative; width: 13px; height: 13px; display: block; margin-right: 1px; }
.tbl-badge { position: absolute; left: 5px; top: 6px; width: 8px; height: 8px; border-radius: 50%; background: #f2c811; font-size: 6px; line-height: 8px; text-align: center; color: #333; }
.field { display: flex; align-items: center; height: 18.800px; font-size: 9px; color: #555; white-space: nowrap; }
.cb { width: 9px; height: 9px; border: 1px solid #888; border-radius: 1px; margin-left: 25px; font-size: 7px; line-height: 8px; text-align: center; flex: none; }
.cb-on { background: #f2c811; border-color: #f2c811; color: #444; }
.ft { width: 19px; flex: none; display: flex; justify-content: center; font-size: 10px; font-weight: 700; color: #444; padding-right: 3px; }

.status { height: 8px; flex: none; background: #f3f2f1; border-top: 1px solid #ddd; font-size: 7px; line-height: 18px; padding-left: 6px; color: #666; overflow: hidden; }
```
